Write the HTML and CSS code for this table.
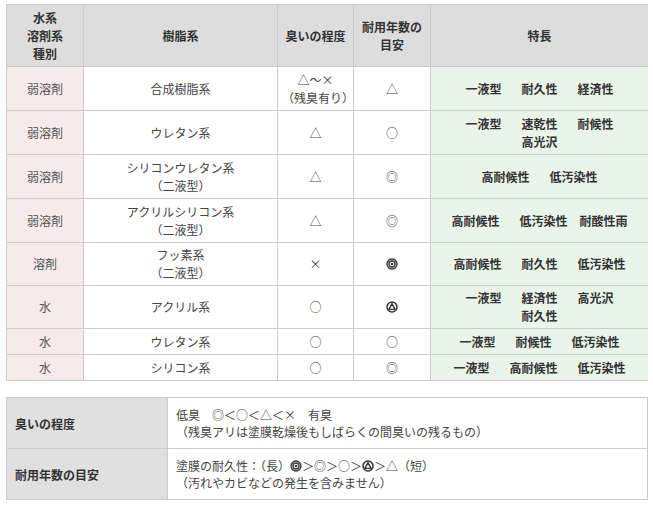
FILE: index.html
```html
<!DOCTYPE html>
<html lang="ja">
<head>
<meta charset="utf-8">
<link rel="stylesheet" href="styles.css">
</head>
<body>
<table class="paint">
  <colgroup>
    <col class="c1"><col class="c2"><col class="c3"><col class="c4"><col class="c5">
  </colgroup>
  <thead>
    <tr>
      <th>水系<br>溶剤系<br>種別</th>
      <th>樹脂系</th>
      <th>臭いの程度</th>
      <th>耐用年数の<br>目安</th>
      <th>特長</th>
    </tr>
  </thead>
  <tbody>
    <tr>
      <td class="kind">弱溶剤</td>
      <td>合成樹脂系</td>
      <td>△～×<br>（残臭有り）</td>
      <td>△</td>
      <td class="feat"><span>一液型</span><span>耐久性</span><span>経済性</span></td>
    </tr>
    <tr>
      <td class="kind">弱溶剤</td>
      <td>ウレタン系</td>
      <td>△</td>
      <td>○</td>
      <td class="feat"><span>一液型</span><span>速乾性</span><span>耐候性</span><br><span>高光沢</span></td>
    </tr>
    <tr>
      <td class="kind">弱溶剤</td>
      <td>シリコンウレタン系<br>（二液型）</td>
      <td>△</td>
      <td>◎</td>
      <td class="feat"><span>高耐候性</span><span>低汚染性</span></td>
    </tr>
    <tr>
      <td class="kind">弱溶剤</td>
      <td>アクリルシリコン系<br>（二液型）</td>
      <td>△</td>
      <td>◎</td>
      <td class="feat"><span>高耐候性</span><span>低汚染性</span><span class="tight">耐酸性雨</span></td>
    </tr>
    <tr class="mid">
      <td class="kind">溶剤</td>
      <td>フッ素系<br>（二液型）</td>
      <td>×</td>
      <td><svg class="sym" viewBox="0 0 12 12"><circle cx="6" cy="6" r="5" fill="none" stroke="#3a3a3a" stroke-width="1.4"/><circle cx="6" cy="6" r="3" fill="none" stroke="#3a3a3a" stroke-width="1.4"/><circle cx="6" cy="6" r="1.3" fill="#3a3a3a"/></svg></td>
      <td class="feat"><span>高耐候性</span><span>耐久性</span><span>低汚染性</span></td>
    </tr>
    <tr class="mid">
      <td class="kind">水</td>
      <td>アクリル系</td>
      <td>○</td>
      <td><svg class="sym" viewBox="0 0 12 12"><circle cx="6" cy="6" r="5" fill="none" stroke="#333" stroke-width="1.5"/><polygon points="6,2.6 9.1,8.4 2.9,8.4" fill="none" stroke="#333" stroke-width="1.4" stroke-linejoin="round"/></svg></td>
      <td class="feat"><span>一液型</span><span>経済性</span><span>高光沢</span><br><span>耐久性</span></td>
    </tr>
    <tr>
      <td class="kind">水</td>
      <td>ウレタン系</td>
      <td>○</td>
      <td>○</td>
      <td class="feat"><span>一液型</span><span>耐候性</span><span>低汚染性</span></td>
    </tr>
    <tr>
      <td class="kind">水</td>
      <td>シリコン系</td>
      <td>○</td>
      <td>◎</td>
      <td class="feat"><span>一液型</span><span>高耐候性</span><span>低汚染性</span></td>
    </tr>
  </tbody>
</table>

<table class="legend">
  <tr>
    <th>臭いの程度</th>
    <td>低臭　◎＜○＜△＜×　有臭<br>（残臭アリは塗膜乾燥後もしばらくの間臭いの残るもの）</td>
  </tr>
  <tr>
    <th>耐用年数の目安</th>
    <td>塗膜の耐久性：（長）<svg class="sym" viewBox="0 0 12 12"><circle cx="6" cy="6" r="5" fill="none" stroke="#3a3a3a" stroke-width="1.4"/><circle cx="6" cy="6" r="3" fill="none" stroke="#3a3a3a" stroke-width="1.4"/><circle cx="6" cy="6" r="1.3" fill="#3a3a3a"/></svg>＞◎＞○＞<svg class="sym" viewBox="0 0 12 12"><circle cx="6" cy="6" r="5" fill="none" stroke="#333" stroke-width="1.5"/><polygon points="6,2.6 9.1,8.4 2.9,8.4" fill="none" stroke="#333" stroke-width="1.4" stroke-linejoin="round"/></svg>＞△（短）<br>（汚れやカビなどの発生を含みません）</td>
  </tr>
</table>
</body>
</html>
```

FILE: styles.css
```css
html, body {
  background: #ffffff;
}
body {
  margin: 4px 5px 0 6px;
  font-family: "Noto Sans CJK JP", "Noto Sans", sans-serif;
  font-size: 12px;
  color: #444444;
}
table {
  border-collapse: collapse;
  width: 642px;
  table-layout: fixed;
}
.paint th,
.paint td {
  border: 1px solid #cccccc;
  text-align: center;
  vertical-align: middle;
  line-height: 18px;
  padding: 4px 4px 3px;
}
.paint th {
  background: #dddddd;
  color: #333333;
  font-weight: bold;
}
.paint .c1 { width: 77px; }
.paint .c2 { width: 194px; }
.paint .c3 { width: 76px; }
.paint .c4 { width: 77px; }
.paint .c5 { width: 218px; }
.paint .mid td {
  padding-top: 3px;
  padding-bottom: 3px;
}
.paint td.kind {
  background: #f6eaea;
  color: #555555;
}
.paint td.feat {
  background: #eaf5ea;
  color: #333333;
  font-weight: bold;
}
.feat span {
  display: inline-block;
  margin: 0 10px;
}
.feat span.tight {
  margin-left: 2px;
}
.sym {
  width: 12px;
  height: 12px;
  vertical-align: -1px;
}
.legend {
  margin-top: 16px;
}
.legend th,
.legend td {
  border: 1px solid #cccccc;
  line-height: 17px;
  padding: 8px;
  height: 33px;
  text-align: left;
  vertical-align: middle;
}
.legend th {
  width: 144px;
  background: #e0e0e0;
  color: #333333;
  font-weight: bold;
}
.legend td {
  color: #444444;
}
```
